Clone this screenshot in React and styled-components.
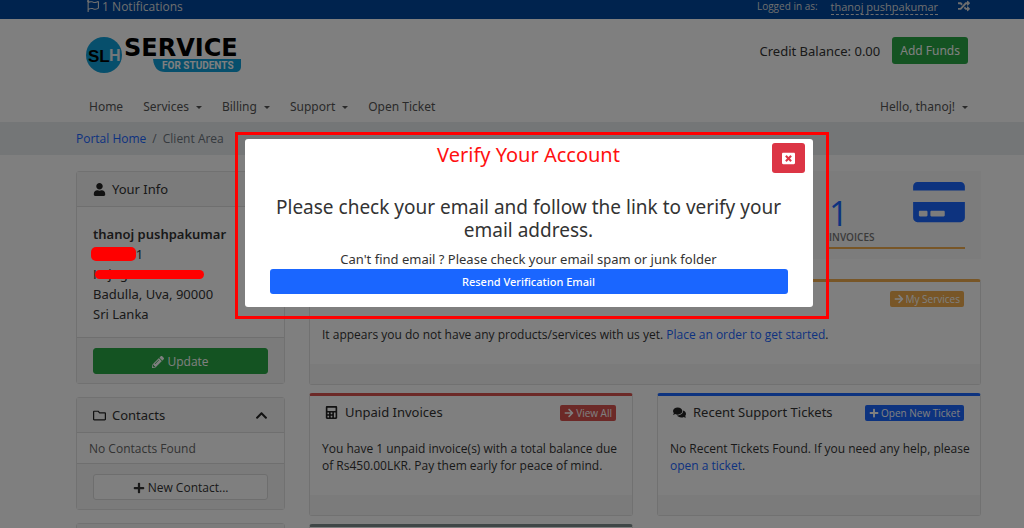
import React, { useState } from "react";
import styled, { createGlobalStyle } from "styled-components";
import {
  FaArrowRight,
  FaCalculator,
  FaChevronUp,
  FaComments,
  FaCreditCard,
  FaPencilAlt,
  FaPlus,
  FaRandom,
  FaRegFlag,
  FaRegFolder,
  FaUser,
  FaWindowClose,
} from "react-icons/fa";

const menu = [
  { label: "Home" },
  { label: "Services", dropdown: true },
  { label: "Billing", dropdown: true },
  { label: "Support", dropdown: true },
  { label: "Open Ticket" },
];

const Logo = () => (
  <svg width="158" height="40" viewBox="0 -4 158 40" role="img" aria-label="SLH Service for Students">
    <circle cx="18" cy="18" r="18" fill="#0f9fd8" />
    <LogoText x="2" y="25" $size={17} $font="Liberation Sans" fill="#000">
      SL
    </LogoText>
    <LogoText x="23" y="24" $size={16} $font="Liberation Sans" fill="#e4eef3">
      H
    </LogoText>
    <LogoText x="38" y="19" $size={24} $font="DejaVu Sans" fill="#000">
      SERVICE
    </LogoText>
    <path d="M67 22h88v7c0 4-2 6-6 6H79c-7 0-11-4-12-13z" fill="#0f9fd8" />
    <LogoText x="76" y="32" $size={10} $font="Roboto" fill="#fff">
      FOR STUDENTS
    </LogoText>
  </svg>
);

const TopBar = () => (
  <TopStrip>
    <TopLink href="#notifications">
      <FaRegFlag /> 1 Notifications
    </TopLink>
    <TopRight>
      <small>Logged in as:</small>
      <ActiveClient href="#account">thanoj pushpakumar</ActiveClient>
      <TopLink href="#switch" aria-label="Switch account">
        <FaRandom />
      </TopLink>
    </TopRight>
  </TopStrip>
);

const Header = () => (
  <SiteHeader>
    <Brand>
      <LogoLink href="#home">
        <Logo />
      </LogoLink>
      <Credit>
        Credit Balance: 0.00
        <FundsButton type="button">Add Funds</FundsButton>
      </Credit>
    </Brand>
    <Nav>
      {menu.map(({ label, dropdown }) => (
        <NavLink key={label} href="#nav">
          {label}
          {dropdown && <Caret />}
        </NavLink>
      ))}
      <NavLink href="#hello" $last>
        Hello, thanoj!
        <Caret />
      </NavLink>
    </Nav>
  </SiteHeader>
);

const Sidebar = () => (
  <Aside>
    <Card>
      <CardHeader>
        <FaUser />
        Your Info
      </CardHeader>
      <Address>
        <strong>thanoj pushpakumar</strong>
        <AddressLine>
          <Redacted>000000</Redacted>1
        </AddressLine>
        <AddressLine>
          Kajug
          <Stroke />
        </AddressLine>
        <AddressLine>Badulla, Uva, 90000</AddressLine>
        <AddressLine>Sri Lanka</AddressLine>
      </Address>
      <CardFooter>
        <BlockButton type="button" $green>
          <FaPencilAlt /> Update
        </BlockButton>
      </CardFooter>
    </Card>
    <Card>
      <CardHeader>
        <FaRegFolder />
        Contacts
        <FaChevronUp />
      </CardHeader>
      <ListItem>No Contacts Found</ListItem>
      <CardFooter>
        <BlockButton type="button">
          <FaPlus /> New Contact...
        </BlockButton>
      </CardFooter>
    </Card>
    <Card>
      <CardHeader />
    </Card>
  </Aside>
);

const Panel = ({ color, icon, title, action, actionIcon, wide, children }) => (
  <PanelCard $color={color} $wide={wide}>
    <PanelHeader>
      {icon}
      <PanelTitle>{title}</PanelTitle>
      {action && (
        <PanelButton type="button" $color={color}>
          {actionIcon}
          {action}
        </PanelButton>
      )}
    </PanelHeader>
    <PanelBody>{children}</PanelBody>
    <PanelFooter />
  </PanelCard>
);

const VerifyDialog = ({ onClose }) => (
  <Backdrop>
    <Frame>
      <Dialog role="dialog" aria-modal="true" aria-labelledby="verify-title">
        <DialogHeader>
          <DialogTitle id="verify-title">Verify Your Account</DialogTitle>
          <CloseButton type="button" aria-label="Close" onClick={onClose}>
            <FaWindowClose />
          </CloseButton>
        </DialogHeader>
        <DialogBody>
          <Message>
            Please check your email and follow the link to verify your email
            address.
          </Message>
          <Hint>Can't find email ? Please check your email spam or junk folder</Hint>
          <ResendButton type="button">Resend Verification Email</ResendButton>
        </DialogBody>
      </Dialog>
    </Frame>
  </Backdrop>
);

const App = () => {
  const [open, setOpen] = useState(true);

  return (
    <>
      <GlobalStyle />
      <Page>
        <TopBar />
        <Header />
        <Breadcrumb aria-label="breadcrumb">
          <a href="#portal">Portal Home</a>
          <span>/</span>
          <span>Client Area</span>
        </Breadcrumb>
        <Content>
          <Sidebar />
          <main>
            <Tiles>
              <Tile href="#invoices">
                <TileIcon>
                  <FaCreditCard />
                </TileIcon>
                <TileStat>1</TileStat>
                <TileLabel>INVOICES</TileLabel>
                <TileLine />
              </Tile>
            </Tiles>
            <Panels>
              <Panel
                wide
                color="#f0ad4e"
                action="My Services"
                actionIcon={<FaArrowRight />}
              >
                It appears you do not have any products/services with us yet.{" "}
                <a href="#order">Place an order to get started</a>.
              </Panel>
              <Panel
                color="#d9534f"
                icon={<FaCalculator />}
                title="Unpaid Invoices"
                action="View All"
                actionIcon={<FaArrowRight />}
              >
                You have 1 unpaid invoice(s) with a total balance due of
                Rs450.00LKR. Pay them early for peace of mind.
              </Panel>
              <Panel
                color="#1a66ff"
                icon={<FaComments />}
                title="Recent Support Tickets"
                action="Open New Ticket"
                actionIcon={<FaPlus />}
              >
                No Recent Tickets Found. If you need any help, please{" "}
                <a href="#ticket">open a ticket</a>.
              </Panel>
              <Panel color="#7f8c8d" />
            </Panels>
          </main>
        </Content>
      </Page>
      {open && <VerifyDialog onClose={() => setOpen(false)} />}
    </>
  );
};

export default App;

const narrow = `"Open Sans", "Noto Sans", sans-serif`;

const GlobalStyle = createGlobalStyle`
  * {
    box-sizing: border-box;
  }

  body {
    margin: 0;
    background: #fff;
    color: #333;
    font-family: "Noto Sans", "Open Sans", sans-serif;
    font-size: 13px;
    line-height: 20px;
  }

  a {
    color: #1a66ff;
    text-decoration: none;
  }

  button {
    font-family: inherit;
    cursor: pointer;
  }
`;

const Page = styled.div`
  height: 100vh;
  overflow: hidden;
`;

const LogoLink = styled.a`
  margin-top: -4px;
`;

const LogoText = styled.text`
  font-family: "${({ $font }) => $font}", sans-serif;
  font-size: ${({ $size }) => $size}px;
  font-weight: 700;
`;

// the container sits between these two gutters
const Gutter = styled.div`
  padding-left: 76px;
  padding-right: 43px;
`;

const TopStrip = styled(Gutter)`
  display: flex;
  justify-content: space-between;
  height: 19px;
  padding-left: 87px;
  padding-right: 54px;
  background: #00479c;
  color: #ddd;
  font-family: ${narrow};
  font-size: 12px;
  line-height: 13px;

  small {
    font-size: 10px;
  }
`;

const TopLink = styled.a`
  color: #ddd;

  svg {
    width: auto;
    vertical-align: -1px;
  }
`;

const TopRight = styled.div`
  display: flex;
  gap: 13px;

  ${TopLink} {
    margin-left: 7px;
  }
`;

const ActiveClient = styled.a`
  height: 15px;
  border-bottom: 1px dashed #ddd;
  color: #ddd;
  font-size: 11px;
`;

const SiteHeader = styled(Gutter)`
  padding-top: 18px;
  padding-bottom: 5px;
  background: #fff;
`;

const Brand = styled.div`
  display: flex;
  justify-content: space-between;
  align-items: flex-start;
  height: 60px;
  padding: 0 13px 0 10px;
`;

const Credit = styled.div`
  display: flex;
  align-items: center;
  gap: 12px;
`;

const FundsButton = styled.button`
  height: 27px;
  padding: 0 8px;
  border: 0;
  border-radius: 3px;
  background: #28a745;
  color: #fff;
  font-size: 12px;
`;

const Nav = styled.nav`
  display: flex;
  gap: 20px;
  padding: 0 13px;
`;

const NavLink = styled.a`
  display: flex;
  align-items: center;
  gap: 7px;
  margin-left: ${({ $last }) => ($last ? "auto" : "0")};
  color: #555;
  font-size: 12px;
`;

const Caret = styled.span`
  border: 3px solid transparent;
  border-top-color: currentColor;
  border-bottom: 0;
`;

const Breadcrumb = styled(Gutter).attrs({ as: "nav" })`
  display: flex;
  gap: 6px;
  padding-top: 7px;
  padding-bottom: 6px;
  background: #e9ecef;
  color: #6c757d;
  font-family: ${narrow};
  font-size: 12px;
`;

const Content = styled(Gutter)`
  display: grid;
  grid-template-columns: 209px minmax(0, 1fr);
  gap: 24px;
  padding-top: 16px;
`;

const Aside = styled.aside`
  display: flex;
  flex-direction: column;
  gap: 13px;
`;

const Card = styled.section`
  border: 1px solid #e3e3e3;
  border-radius: 3px;
  background: #fff;
`;

const CardHeader = styled.h3`
  display: flex;
  align-items: center;
  gap: 6px;
  height: 35px;
  margin: 0;
  padding: 0 16px;
  border-bottom: 1px solid #dfdfdf;
  background: #f7f7f7;
  font-size: 13px;
  font-weight: 400;

  svg {
    flex: none;
    width: auto;
    color: #222;
  }

  svg:nth-of-type(2) {
    margin-left: auto;
  }
`;

const Address = styled.div`
  padding: 17px 16px 13px;

  strong {
    font-weight: 600;
  }
`;

const AddressLine = styled.div`
  position: relative;
`;

const Redacted = styled.span`
  position: relative;
  z-index: 2;
  display: inline-block;
  height: 14px;
  margin-left: -2px;
  border-radius: 5px;
  background: #f00;
  color: #f00;
  line-height: 14px;
`;

const Stroke = styled.span`
  position: absolute;
  z-index: 2;
  top: 6px;
  left: 2px;
  width: 109px;
  height: 9px;
  border-radius: 5px;
  background: #f00;
`;

const CardFooter = styled.div`
  padding: 10px 16px 9px;
  border-top: 1px solid #dfdfdf;
  background: #f7f7f7;
`;

const BlockButton = styled.button`
  display: block;
  width: 100%;
  height: 26px;
  padding: 0;
  border: 1px solid ${({ $green }) => ($green ? "#28a745" : "#ddd")};
  border-radius: 3px;
  background: ${({ $green }) => ($green ? "#28a745" : "#fff")};
  color: ${({ $green }) => ($green ? "#fff" : "#333")};
  font-family: ${narrow};
  font-size: 12px;

  svg {
    width: auto;
    vertical-align: -2px;
  }
`;

const ListItem = styled.div`
  padding: 6px 12px 4px;
  color: #666;
  font-family: ${narrow};
  font-size: 12px;
`;

const Tiles = styled.div`
  display: grid;
  grid-template-columns: repeat(4, 1fr);
`;

const Tile = styled.a`
  display: grid;
  grid-template-columns: 1fr auto;
  grid-column: 4;
  padding: 8px 16px 10px;
  background: #f8f8f8;
`;

const TileIcon = styled.div`
  grid-column: 2;
  grid-row: 1;

  svg {
    display: block;
    width: 52px;
    height: 46px;
  }
`;

const TileStat = styled.div`
  grid-column: 1;
  grid-row: 1;
  padding-top: 17px;
  font-family: ${narrow};
  font-size: 34px;
  line-height: 34px;
`;

const TileLabel = styled.div`
  color: #777;
  font-family: ${narrow};
  font-size: 10px;
  font-weight: 600;
  line-height: 14px;
`;

const TileLine = styled.div`
  grid-column: 1 / -1;
  height: 2px;
  margin-top: 3px;
  background: #f0ad4e;
`;

const Panels = styled.div`
  display: grid;
  grid-template-columns: 1fr 1fr;
  gap: 8px 24px;
  padding-top: 20px;
`;

const PanelCard = styled.section`
  grid-column: ${({ $wide }) => ($wide ? "1 / -1" : "auto")};
  border: 1px solid #e3e3e3;
  border-top: 3px solid ${({ $color }) => $color};
  border-radius: 3px;
`;

const PanelHeader = styled.div`
  display: flex;
  align-items: center;
  gap: 7px;
  height: 32px;
  padding: 0 16px 0 15px;

  svg {
    flex: none;
    width: auto;
    color: #222;
  }
`;

const PanelTitle = styled.h3`
  flex: 1;
  margin: 0;
  font-size: 13px;
  font-weight: 400;
`;

const PanelButton = styled.button`
  display: flex;
  align-items: center;
  gap: 2px;
  height: 16px;
  margin-top: 2px;
  padding: 0 4px;
  border: 0;
  border-radius: 2px;
  background: ${({ $color }) => $color};
  color: #fff;
  font-family: ${narrow};
  font-size: 10px;

  svg {
    color: #fff;
  }
`;

const PanelBody = styled.div`
  padding: 12px 8px 21px 12px;
  font-family: ${narrow};
  font-size: 12px;
  line-height: 17px;
`;

const PanelFooter = styled.div`
  height: 20px;
  background: #f7f7f7;
`;

const Backdrop = styled.div`
  position: fixed;
  inset: 0;
  z-index: 1;
  display: flex;
  justify-content: center;
  align-items: flex-start;
  padding: 132px 0 0 39px;
  background: rgba(0, 0, 0, 0.5);
`;

const Frame = styled.div`
  width: 594px;
  padding: 4px 13px 9px 7px;
  border: 3px solid #f00;
`;

const Dialog = styled.div`
  border-radius: 3px;
  background: #fff;
`;

const DialogHeader = styled.div`
  display: grid;
  grid-template-columns: 1fr auto 1fr;
  align-items: start;
  padding: 4px 8px;
`;

const DialogTitle = styled.h2`
  grid-column: 2;
  margin: 0;
  color: #ff1010;
  font-size: 20px;
  font-weight: 400;
  line-height: 24px;
`;

const CloseButton = styled.button`
  justify-self: end;
  width: 33px;
  height: 30px;
  padding: 0;
  border: 0;
  border-radius: 3px;
  background: #dc3545;
  color: #fff;
  font-size: 13px;

  svg {
    display: block;
    margin: auto;
  }
`;

const DialogBody = styled.div`
  padding: 19px 25px 13px;
  text-align: center;
`;

const Message = styled.p`
  margin: 0 0 7px;
  font-size: 19px;
  line-height: 23px;
`;

const Hint = styled.p`
  margin: 0;
  line-height: 20px;
`;

const ResendButton = styled.button`
  display: block;
  width: 100%;
  height: 25px;
  border: 0;
  border-radius: 3px;
  background: #1a66ff;
  color: #fff;
  font-size: 11px;
  font-weight: 500;
`;
